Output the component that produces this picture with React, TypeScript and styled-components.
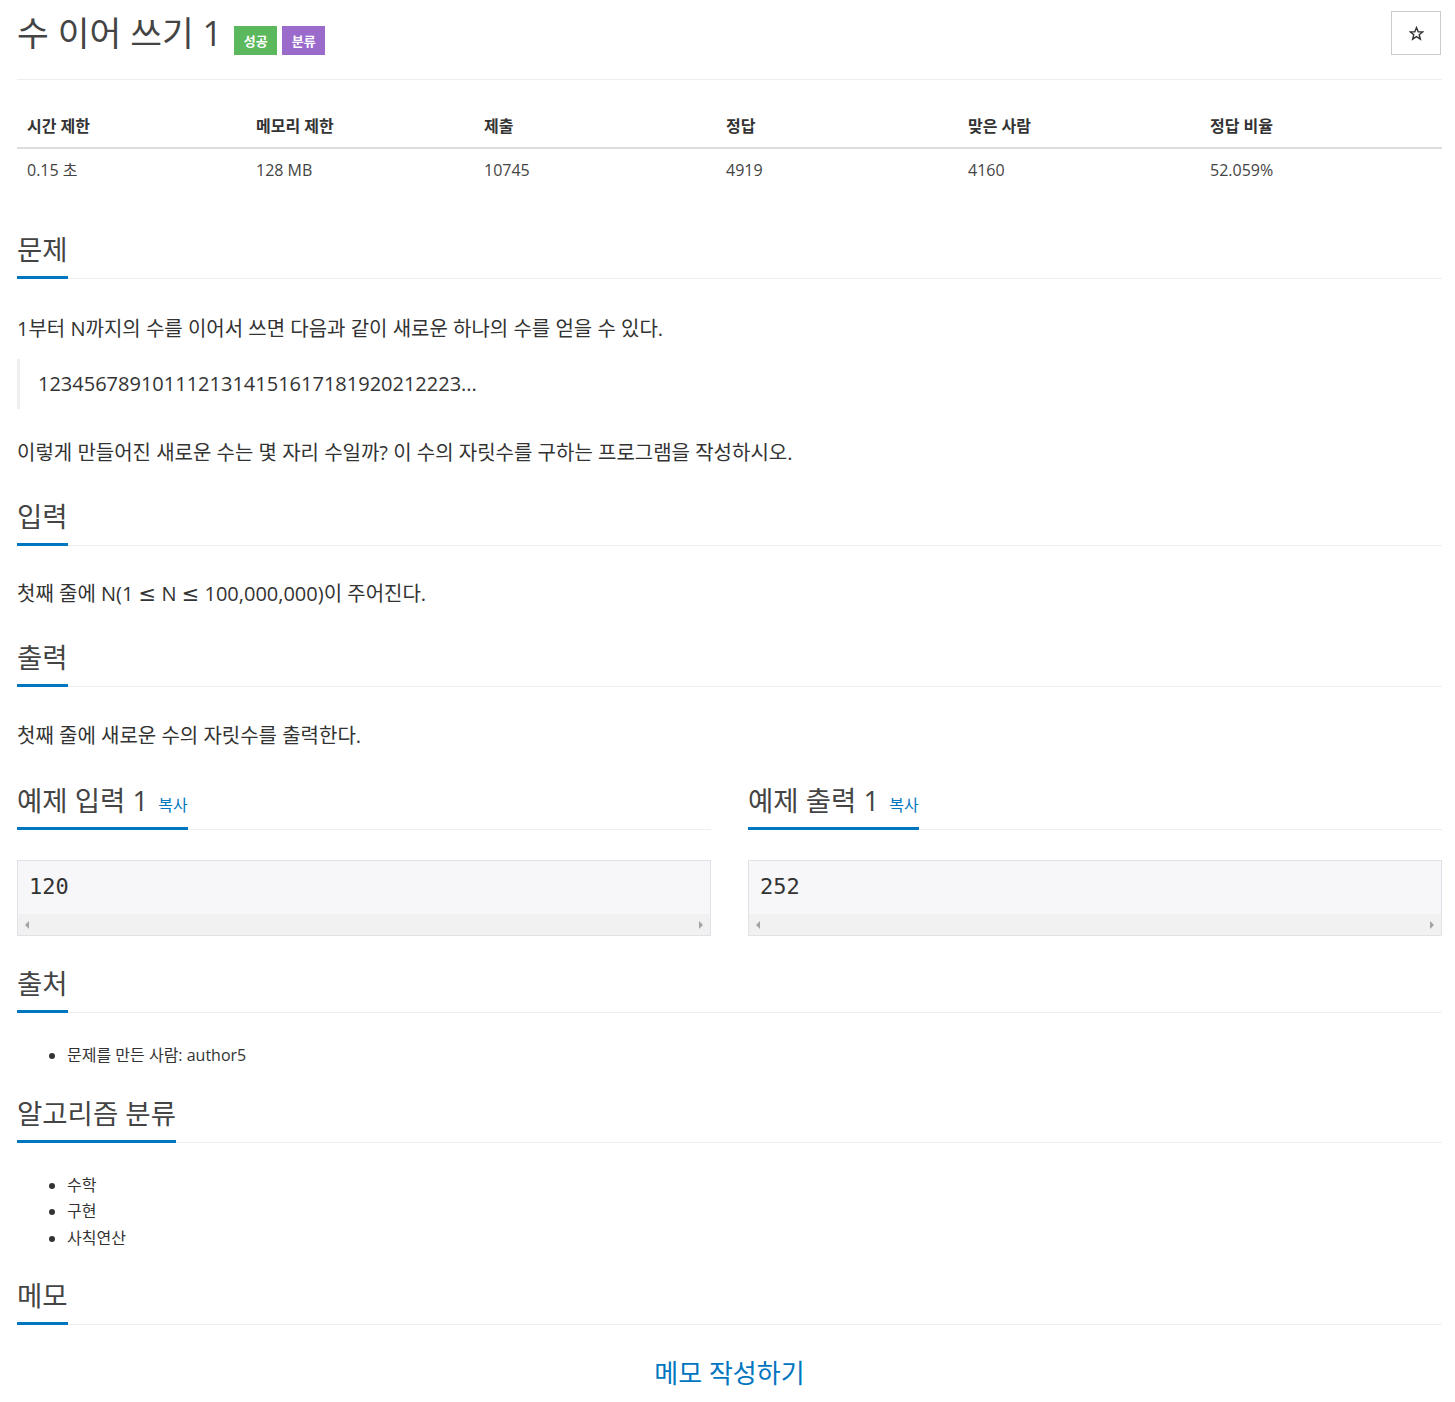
import React from "react";
import styled, { createGlobalStyle } from "styled-components";

const Global = createGlobalStyle`
  html, body { margin: 0; padding: 0; background: #fff; }
  body {
    font-family: "Open Sans", "Noto Sans CJK KR", sans-serif;
    color: #333;
  }
  * { box-sizing: border-box; }
`;

const Page = styled.div`
  padding: 0 13px 30px 17px;
`;

const Header = styled.div`
  display: flex;
  align-items: flex-start;
  justify-content: space-between;
  border-bottom: 1px solid #eee;
  padding-top: 11px;
  height: 80px;
`;

const TitleRow = styled.div`
  display: flex;
  align-items: center;
  gap: 5px;
`;

const Title = styled.h1`
  margin: 0 7px 0 0;
  font-size: 34.5px;
  font-weight: 400;
  color: #444;
  line-height: 44px;
`;

const Badge = styled.span<{ $bg: string }>`
  display: inline-flex;
  align-items: center;
  justify-content: center;
  background: ${(p) => p.$bg};
  color: #fff;
  font-size: 13px;
  font-weight: 700;
  height: 29px;
  width: 43px;
  margin-top: 15px;
`;

const StarButton = styled.button`
  width: 50px;
  height: 44px;
  border: 1px solid #ccc;
  background: #fff;
  display: flex;
  align-items: center;
  justify-content: center;
  padding: 0;
  margin-right: 1px;
`;

const Table = styled.table`
  width: 100%;
  border-collapse: collapse;
  margin-top: 24px;
  font-size: 16px;
  line-height: 22px;
  table-layout: fixed;
`;

const Th = styled.th<{ $w: number }>`
  width: ${(p) => p.$w}px;
  text-align: left;
  font-weight: 700;
  color: #333;
  padding: 11px 10px 10px;
  border-bottom: 2px solid #ddd;
`;

const Td = styled.td`
  padding: 10px 10px 10px;
  color: #444;
`;

const Section = styled.section<{ $mt?: number }>`
  margin-top: ${(p) => p.$mt ?? 0}px;
`;

const HeadLine = styled.div`
  border-bottom: 1px solid #eee;
  display: flex;
`;

const HeadText = styled.h2`
  margin: 0 0 -1px;
  font-size: 27.5px;
  font-weight: 400;
  color: #444;
  line-height: 40px;
  height: 49px;
  padding-bottom: 6px;
  border-bottom: 3px solid #0076c0;
  display: flex;
  align-items: baseline;
  gap: 10px;
`;

const Copy = styled.span`
  font-size: 16px;
  line-height: 1;
  color: #0076c0;
`;

const Para = styled.p<{ $mt?: number }>`
  margin: ${(p) => p.$mt ?? 0}px 0 0;
  font-size: 20px;
  line-height: 30px;
  color: #333;
`;

const MathSign = styled.span`
  font-family: "DejaVu Sans", sans-serif;
  font-size: 21px;
`;

const Quote = styled.blockquote`
  margin: 15px 0 0;
  border-left: 3px solid #eee;
  padding: 10px 0 10px 18px;
  font-size: 20px;
  line-height: 30px;
`;

const Samples = styled.div`
  display: grid;
  grid-template-columns: 1fr 1fr;
  gap: 37px;
  margin-top: 30px;
`;

const Pre = styled.div`
  margin-top: 30px;
  border: 1px solid #e1e1e8;
  background: #f7f7f9;
`;

const Code = styled.div`
  font-family: "DejaVu Sans Mono", monospace;
  font-size: 22px;
  color: #333;
  padding: 10px 11px 11px;
  line-height: 32px;
`;

const Scrollbar = styled.div`
  height: 21px;
  background: #f1f1f1;
  display: flex;
  align-items: center;
  justify-content: space-between;
  padding: 0 7px;
`;

const Arrow = styled.span<{ $dir: "l" | "r" }>`
  width: 0;
  height: 0;
  border-top: 4px solid transparent;
  border-bottom: 4px solid transparent;
  ${(p) => (p.$dir === "l" ? "border-right: 4px solid #a3a3a3;" : "border-left: 4px solid #a3a3a3;")}
`;

const List = styled.ul<{ $mt?: number }>`
  margin: ${(p) => p.$mt ?? 0}px 0 0;
  padding-left: 50px;
  font-size: 16px;
  line-height: 26.5px;
  color: #333;
`;

const MemoLink = styled.div`
  text-align: center;
  font-size: 26px;
  color: #0076c0;
  margin-top: 28px;
`;

const StarIcon = () => (
  <svg width="15" height="15" viewBox="0 0 24 24" fill="none" stroke="#333" strokeWidth="2.2" strokeLinejoin="miter">
    <polygon points="12,2.5 14.7,9.2 21.8,9.5 16.3,14 18.2,21 12,17 5.8,21 7.7,14 2.2,9.5 9.3,9.2" />
  </svg>
);

const Heading = ({ children, copy }: { children: React.ReactNode; copy?: boolean }) => (
  <HeadLine>
    <HeadText>
      {children}
      {copy && <Copy>복사</Copy>}
    </HeadText>
  </HeadLine>
);

const SampleBox = ({ value }: { value: string }) => (
  <Pre>
    <Code>{value}</Code>
    <Scrollbar>
      <Arrow $dir="l" />
      <Arrow $dir="r" />
    </Scrollbar>
  </Pre>
);

export default function App() {
  return (
    <Page>
      <Global />
      <Header>
        <TitleRow>
          <Title>수 이어 쓰기 1</Title>
          <Badge $bg="#5cb85c">성공</Badge>
          <Badge $bg="#9b6bcc">분류</Badge>
        </TitleRow>
        <StarButton>
          <StarIcon />
        </StarButton>
      </Header>

      <Table>
        <thead>
          <tr>
            <Th $w={229}>시간 제한</Th>
            <Th $w={228}>메모리 제한</Th>
            <Th $w={242}>제출</Th>
            <Th $w={242}>정답</Th>
            <Th $w={242}>맞은 사람</Th>
            <Th $w={242}>정답 비율</Th>
          </tr>
        </thead>
        <tbody>
          <tr>
            <Td>0.15 초</Td>
            <Td>128 MB</Td>
            <Td>10745</Td>
            <Td>4919</Td>
            <Td>4160</Td>
            <Td>52.059%</Td>
          </tr>
        </tbody>
      </Table>

      <Section $mt={39}>
        <Heading>문제</Heading>
        <Para $mt={35}>1부터 N까지의 수를 이어서 쓰면 다음과 같이 새로운 하나의 수를 얻을 수 있다.</Para>
        <Quote>1234567891011121314151617181920212223...</Quote>
        <Para $mt={29}>이렇게 만들어진 새로운 수는 몇 자리 수일까? 이 수의 자릿수를 구하는 프로그램을 작성하시오.</Para>
      </Section>

      <Section $mt={29}>
        <Heading>입력</Heading>
        <Para $mt={33}>
          첫째 줄에 N(1 <MathSign>≤</MathSign> N <MathSign>≤</MathSign> 100,000,000)이 주어진다.
        </Para>
      </Section>

      <Section $mt={29}>
        <Heading>출력</Heading>
        <Para $mt={34}>첫째 줄에 새로운 수의 자릿수를 출력한다.</Para>
      </Section>

      <Samples>
        <div>
          <Heading copy>예제 입력 1</Heading>
          <SampleBox value="120" />
        </div>
        <div>
          <Heading copy>예제 출력 1</Heading>
          <SampleBox value="252" />
        </div>
      </Samples>

      <Section $mt={28}>
        <Heading>출처</Heading>
        <List $mt={29}>
          <li>문제를 만든 사람: author5</li>
        </List>
      </Section>

      <Section $mt={25}>
        <Heading>알고리즘 분류</Heading>
        <List $mt={29}>
          <li>수학</li>
          <li>구현</li>
          <li>사칙연산</li>
        </List>
      </Section>

      <Section $mt={25}>
        <Heading>메모</Heading>
        <MemoLink>메모 작성하기</MemoLink>
      </Section>
    </Page>
  );
}
